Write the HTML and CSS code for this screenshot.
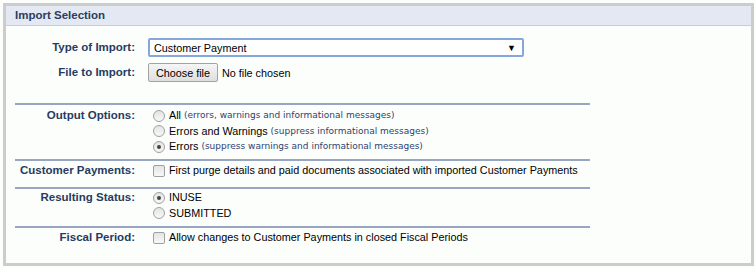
FILE: index.html
```html
<!DOCTYPE html>
<html>
<head>
<meta charset="utf-8">
<link rel="stylesheet" href="styles.css">
</head>
<body>
<div class="panel">
  <div class="panel-head">Import Selection</div>
  <div class="panel-body">
    <div class="section first">
      <div class="row">
        <div class="label">Type of Import:</div>
        <div class="field">
          <div class="select"><span>Customer Payment</span><span class="arrow">▼</span></div>
        </div>
      </div>
      <div class="row">
        <div class="label">File to Import:</div>
        <div class="field">
          <span class="filebtn">Choose file</span><span class="nofile">No file chosen</span>
        </div>
      </div>
    </div>
    <div class="section s-oo">
      <div class="row">
        <div class="label">Output Options:</div>
        <div class="field list">
          <div class="opt"><span class="radio"></span>All <small>(errors, warnings and informational messages)</small></div>
          <div class="opt"><span class="radio"></span>Errors and Warnings <small>(suppress informational messages)</small></div>
          <div class="opt"><span class="radio on"></span>Errors <small>(suppress warnings and informational messages)</small></div>
        </div>
      </div>
    </div>
    <div class="section s-cp">
      <div class="row">
        <div class="label">Customer Payments:</div>
        <div class="field list">
          <div class="opt"><span class="check"></span>First purge details and paid documents associated with imported Customer Payments</div>
        </div>
      </div>
    </div>
    <div class="section s-rs">
      <div class="row">
        <div class="label">Resulting Status:</div>
        <div class="field list">
          <div class="opt"><span class="radio on"></span>INUSE</div>
          <div class="opt"><span class="radio"></span>SUBMITTED</div>
        </div>
      </div>
    </div>
    <div class="section s-fp">
      <div class="row">
        <div class="label">Fiscal Period:</div>
        <div class="field list">
          <div class="opt"><span class="check"></span>Allow changes to Customer Payments in closed Fiscal Periods</div>
        </div>
      </div>
    </div>
  </div>
</div>
</body>
</html>
```
FILE: styles.css
```css
html, body {
  margin: 0;
  padding: 0;
  background: #fcfefc;
}
body {
  padding: 3px 2px 2px 3px;
  font-family: "Liberation Sans", Arial, sans-serif;
  font-size: 10.8px;
  color: #000;
}
.panel {
  width: 745px;
  height: 257px;
  border: 3px solid #cbcccb;
  background: #fcfefc;
}
.panel-head {
  height: 19px;
  line-height: 19px;
  background: #e3e8f3;
  border-bottom: 1px solid #c9ccd2;
  padding-left: 9px;
  font-size: 11.5px;
  font-weight: bold;
  color: #2b3d60;
}
.panel-body {
  padding: 0 0 0 9px;
}
.section {
  width: 575px;
  border-top: 2px solid #98a6c2;
}
.section.first {
  border-top: none;
  padding: 12px 0 21px;
  display: flex;
  flex-direction: column;
  gap: 6px;
}
.s-oo { padding: 3px 0 4.5px; }
.s-cp { padding: 2px 0 8.5px; }
.s-rs { padding: 1px 0 5px; }
.s-fp { padding: 2px 0 0; }
.row {
  display: grid;
  grid-template-columns: 120px 1fr;
  column-gap: 13px;
  align-items: start;
}
.label {
  text-align: right;
  font-size: 11.5px;
  font-weight: bold;
  color: #273b60;
  line-height: 15.5px;
}
.first .label {
  line-height: 19px;
}
.field {
  display: flex;
  align-items: center;
}
.list {
  flex-direction: column;
  align-items: flex-start;
  padding-left: 5px;
}
.select {
  box-sizing: border-box;
  width: 376px;
  height: 19px;
  border: 2px solid #86a7dc;
  border-radius: 2px;
  background: #fff;
  display: flex;
  justify-content: space-between;
  align-items: center;
  padding: 0 6px 0 4px;
}
.arrow {
  font-size: 9px;
}
.filebtn {
  box-sizing: border-box;
  height: 19px;
  width: 70px;
  border: 1px solid #a3a3a3;
  border-radius: 2px;
  background: linear-gradient(#f6f6f6, #dedede);
  display: flex;
  align-items: center;
  justify-content: center;
}
.nofile {
  margin-left: 4px;
}
.opt {
  line-height: 15.5px;
  display: flex;
  align-items: center;
  white-space: nowrap;
}
.opt small {
  font-family: "DejaVu Sans", Verdana, sans-serif;
  font-size: 9px;
  color: #2f4270;
  margin-left: 3px;
}
.radio, .check {
  box-sizing: border-box;
  width: 12px;
  height: 12px;
  border: 1px solid #a0a0a0;
  background: linear-gradient(#e4e4e4, #f8f8f8);
  margin: 0 4px 0 0;
  flex: none;
  position: relative;
}
.radio {
  border-radius: 50%;
}
.check {
  border-radius: 2px;
}
.radio.on::after {
  content: "";
  position: absolute;
  left: 3px;
  top: 3px;
  width: 4px;
  height: 4px;
  border-radius: 50%;
  background: #444;
}
```
